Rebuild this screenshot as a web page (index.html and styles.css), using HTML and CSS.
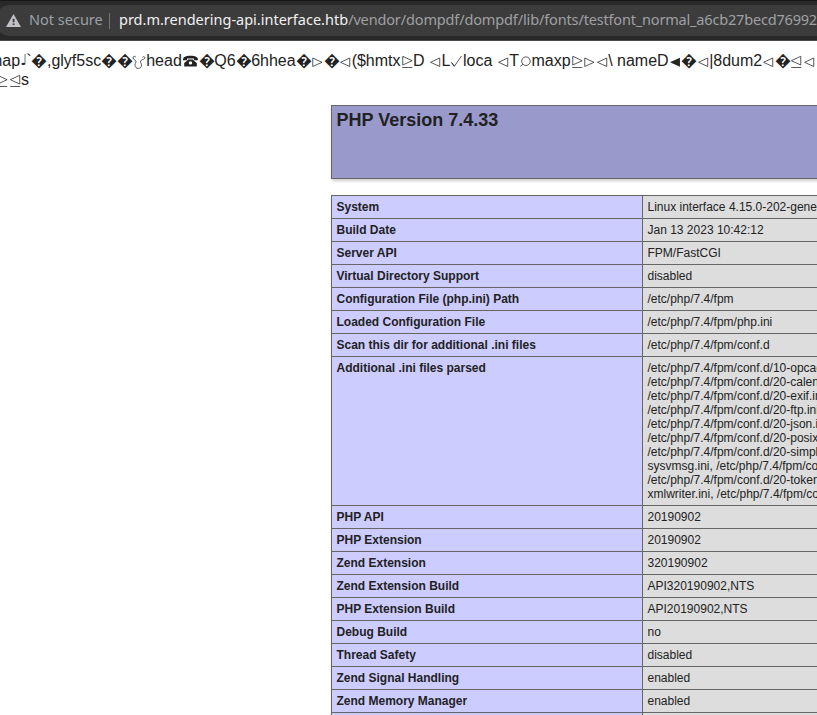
FILE: index.html
```html
<!DOCTYPE html>
<html lang="en">
<head>
<meta charset="utf-8">
<title>phpinfo()</title>
<link rel="stylesheet" href="styles.css">
</head>
<body>
<svg class="defs" width="0" height="0">
  <symbol id="right" viewBox="0 0 12 14"><path d="M1.500 3v8.500l9.200-4.200z"/></symbol>
  <symbol id="left" viewBox="0 0 12 14"><path d="M10.500 3v8.500l-9.200-4.200z"/></symbol>
  <symbol id="solid" viewBox="0 0 12 14"><path class="fill" d="M10.700 2.800v9l-10-4.500z"/></symbol>
  <symbol id="righteq" viewBox="0 0 12 14"><path d="M1.500 1.300v8.700l9.400-4.300zM1 12.500h10"/></symbol>
  <symbol id="lefteq" viewBox="0 0 12 14"><path d="M10.500 1.300v8.700l-9.400-4.300zM1 12.500h10"/></symbol>
  <symbol id="check" viewBox="0 0 12 14"><path d="M1 7.500l3 4L11.200 1M1.500 7.500l2.700 3.300"/></symbol>
  <symbol id="search" viewBox="0 0 12 14"><path d="M3.700 9.300a4.300 4.300 0 1 1 3 1.200c-1.200 0-2-.4-3-1.200l-2.700 2"/></symbol>
  <symbol id="loop" viewBox="0 0 14 14"><path d="M3.800 2C2.500 .5 .8 1.500 1 3c.3 2 3.500 2 3 4-.3 1.200-1 1.500-1 3.200 0 4.300 6.500 4.300 6.500 0 0-1.700-.7-2-1-3.200-.5-2 2.700-2 4-3.500 1-1.300-.7-2.700-2-1.200"/></symbol>
  <symbol id="phone" viewBox="0 0 17 14"><path class="fill" d="M1 5.200C.8 2 4 .8 8.500 .8S16.200 2 16 5.200h-4V3.600H5v1.600zM6 4.500h5l1 1.200 2.800 2.300v3.400H2.200V8L5 5.700z"/><circle cx="8.500" cy="7.900" r="1.700" fill="#fff" stroke="none"/></symbol>
</svg>
<header class="browser">
  <div class="address">
    <svg class="warn" viewBox="0 0 15 13"><path fill="#c0c2c7" d="M7.500 0 15 13H0z"/><path fill="#3c3c3d" d="M6.700 4.700h1.800v3.600H6.700zM6.700 9.400h1.800v1.700H6.700z"/></svg>
    <span class="status">Not secure</span>
    <span class="divider"></span>
    <span class="url"><b>prd.m.rendering-api.interface.htb</b>/vendor/dompdf/dompdf/lib/fonts/<span class="file">testfont_normal_a6cb27becd76992a</span></span>
  </div>
</header>
<main>
  <div class="raw">
    <div class="line">map<i class="note">♩</i>`<i class="bad">�</i>,glyf5sc<i class="bad">�</i><i class="bad">�</i><svg class="g wide"><use href="#loop"/></svg>head<svg class="g phone"><use href="#phone"/></svg><i class="bad">�</i>Q6<i class="bad">�</i>6hhea<i class="bad">�</i><svg class="g"><use href="#right"/></svg><i class="bad">�</i><svg class="g"><use href="#left"/></svg>($hmtx<svg class="g"><use href="#righteq"/></svg>D <svg class="g"><use href="#left"/></svg>L<svg class="g"><use href="#check"/></svg>loca <svg class="g"><use href="#left"/></svg>T<svg class="g"><use href="#search"/></svg>maxp<svg class="g"><use href="#righteq"/></svg><svg class="g"><use href="#right"/></svg><svg class="g"><use href="#left"/></svg>\ nameD<svg class="g"><use href="#solid"/></svg><i class="bad">�</i><svg class="g"><use href="#left"/></svg>|8dum2<svg class="g"><use href="#left"/></svg><i class="bad">�</i><svg class="g"><use href="#lefteq"/></svg><svg class="g"><use href="#left"/></svg></div>
    <div class="line second"><svg class="g"><use href="#righteq"/></svg><svg class="g"><use href="#lefteq"/></svg>s</div>
  </div>
  <div class="center">
    <section class="title"><h1>PHP Version 7.4.33</h1></section>
    <table>
      <tr><th>System</th><td>Linux interface 4.15.0-202-generic</td></tr>
      <tr><th>Build Date</th><td>Jan 13 2023 10:42:12</td></tr>
      <tr><th>Server API</th><td>FPM/FastCGI</td></tr>
      <tr><th>Virtual Directory Support</th><td>disabled</td></tr>
      <tr><th>Configuration File (php.ini) Path</th><td>/etc/php/7.4/fpm</td></tr>
      <tr><th>Loaded Configuration File</th><td>/etc/php/7.4/fpm/php.ini</td></tr>
      <tr><th>Scan this dir for additional .ini files</th><td>/etc/php/7.4/fpm/conf.d</td></tr>
      <tr><th>Additional .ini files parsed</th><td>/etc/php/7.4/fpm/conf.d/10-opcache.ini,<br>/etc/php/7.4/fpm/conf.d/20-calendar.ini,<br>/etc/php/7.4/fpm/conf.d/20-exif.ini,<br>/etc/php/7.4/fpm/conf.d/20-ftp.ini,<br>/etc/php/7.4/fpm/conf.d/20-json.ini,<br>/etc/php/7.4/fpm/conf.d/20-posix.ini,<br>/etc/php/7.4/fpm/conf.d/20-simplexml.ini,<br>sysvmsg.ini, /etc/php/7.4/fpm/conf.d/20-sysvsem.ini,<br>/etc/php/7.4/fpm/conf.d/20-tokenizer.ini,<br>xmlwriter.ini, /etc/php/7.4/fpm/conf.d/20-xsl.ini</td></tr>
      <tr><th>PHP API</th><td>20190902</td></tr>
      <tr><th>PHP Extension</th><td>20190902</td></tr>
      <tr><th>Zend Extension</th><td>320190902</td></tr>
      <tr><th>Zend Extension Build</th><td>API320190902,NTS</td></tr>
      <tr><th>PHP Extension Build</th><td>API20190902,NTS</td></tr>
      <tr><th>Debug Build</th><td>no</td></tr>
      <tr><th>Thread Safety</th><td>disabled</td></tr>
      <tr><th>Zend Signal Handling</th><td>enabled</td></tr>
      <tr><th>Zend Memory Manager</th><td>enabled</td></tr>
      <tr><th>&nbsp;</th><td>&nbsp;</td></tr>
    </table>
  </div>
</main>
</body>
</html>
```
FILE: styles.css
```css
* { box-sizing: border-box; }
html, body { height: 715px; overflow: hidden; }
body { margin: 0; background: #fff; color: #222; font-family: "Liberation Sans", Arial, sans-serif; }
.defs { display: block; }
.browser { height: 41px; padding-top: 4px; background: #29292a; border-top: 1px solid #161617; border-bottom: 1px solid #4b4b4d; overflow: hidden; }
.address { display: flex; align-items: center; height: 31px; width: 860px; margin-left: -5px; padding-left: 11px; background: #3c3c3d; border-radius: 16px; font: 14.5px/20px "Noto Sans", sans-serif; white-space: nowrap; }
.warn { width: 15px; height: 13px; flex: none; margin-top: -1px; }
.status { margin: -3px 0 0 8px; width: 73px; color: #9aa0a6; flex: none; }
.divider { width: 1px; height: 16px; margin: 0 9px 0 7px; background: #757678; flex: none; }
.url { margin-top: -3px; color: #9fa0a2; letter-spacing: -.14px; }
.url b { font-weight: 400; color: #f1f1f1; letter-spacing: 0; }
.file { letter-spacing: -.18px; }
.raw { padding-top: 10px; height: 64px; font-size: 16px; line-height: 19px; white-space: nowrap; }
.line { height: 19px; margin-left: -11px; }
.second { margin-left: -4px; }
.g { display: inline-block; width: 12.5px; height: 14px; vertical-align: -3px; fill: none; stroke: #222; stroke-width: .75; }
.wide { width: 14px; }
.phone { width: 17px; }
.fill { fill: #222; stroke: none; }
.line i { display: inline-block; font-style: normal; height: 19px; vertical-align: top; }
.line .bad { width: 15.5px; }
.line .note { width: 6px; font-family: "DejaVu Sans", sans-serif; font-size: 15px; }
.center { margin-left: 331px; width: 934px; }
.title { height: 74px; padding: 4px 4.5px; background: #99c; border: 1px solid #666; box-shadow: 1px 2px 3px #ccc; }
h1 { margin: 0; font-size: 18px; line-height: 20px; }
table { width: 934px; margin-top: 16px; border-collapse: collapse; table-layout: fixed; box-shadow: 1px 2px 3px #ccc; font-size: 12px; line-height: 14px; }
th, td { padding: 4px 4.5px; border: 1px solid #666; text-align: left; vertical-align: top; }
th { width: 311px; background: #ccf; }
td { background: #ddd; white-space: nowrap; }
```
